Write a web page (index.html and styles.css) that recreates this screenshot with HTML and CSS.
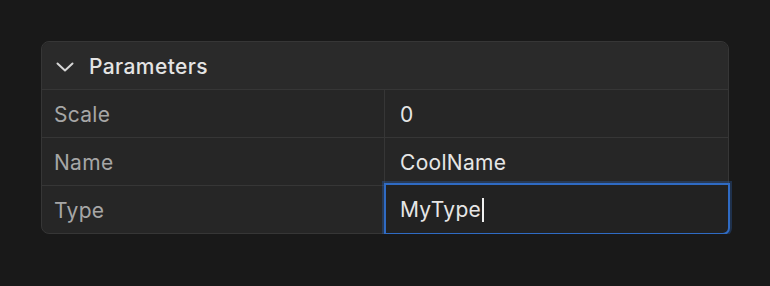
FILE: index.html
```html
<!DOCTYPE html>
<html lang="en">
<head>
  <meta charset="UTF-8" />
  <title>Parameters</title>
  <link rel="stylesheet" href="styles.css">
</head>
<body>
  <div class="panel">
    <div class="panel-header">
      <svg class="chevron" width="18" height="10" viewBox="0 0 18 10"><path d="M1.5 1.5 L9 8.5 L16.5 1.5" fill="none" stroke="#d6d6d6" stroke-width="2" stroke-linecap="round" stroke-linejoin="round"/></svg>
      <span class="title">Parameters</span>
    </div>
    <div class="props">
      <div class="prop-label">Scale</div>
      <div class="prop-value">0</div>
      <div class="prop-label">Name</div>
      <div class="prop-value">CoolName</div>
      <div class="prop-label last">Type</div>
      <div class="prop-value last focused">MyType<span class="caret"></span></div>
    </div>
  </div>
</body>
</html>
```

FILE: styles.css
```css
body {
  margin: 0;
  background: #191919;
  font-family: Inter, "Noto Sans", sans-serif;
  padding: 41px 41px 0 41px;
}
.panel {
  width: 688px;
  border: 1px solid #363636;
  border-radius: 8px;
  background: #262626;
  box-sizing: border-box;
}
.panel-header {
  height: 48px;
  box-sizing: border-box;
  display: flex;
  align-items: center;
  padding: 2px 0 0 14px;
  background: #2a2a2a;
  border-bottom: 1px solid #363636;
  border-radius: 8px 8px 0 0;
}
.chevron {
  margin-right: 15px;
  margin-top: 0;
}
.title {
  color: #e4e4e4;
  font-size: 21px;
  font-weight: 500;
  letter-spacing: 0.4px;
}
.props {
  display: grid;
  grid-template-columns: 343px 1fr;
}
.prop-label, .prop-value {
  height: 48px;
  box-sizing: border-box;
  display: flex;
  align-items: center;
  padding-top: 2px;
  font-size: 21px;
  letter-spacing: 0.3px;
  border-bottom: 1px solid #363636;
}
.prop-label {
  color: #a6a6a6;
  padding-left: 12px;
  border-right: 1px solid #363636;
}
.prop-value {
  color: #e6e6e6;
  padding-left: 15px;
}
.last {
  height: 47px;
  border-bottom: none;
}
.prop-value.focused {
  position: relative;
  margin: -3px -2px -2px -1px;
  height: 52px;
  padding-left: 14px;
  padding-top: 1px;
  border: 2px solid #2f6bc4;
  border-radius: 0 0 7px 0;
  box-shadow: 0 0 0 2px rgba(47, 107, 196, 0.3);
  background: #222222;
}
.caret {
  display: inline-block;
  width: 1.5px;
  height: 24px;
  background: #f0f0f0;
  margin-left: 1px;
}
```
